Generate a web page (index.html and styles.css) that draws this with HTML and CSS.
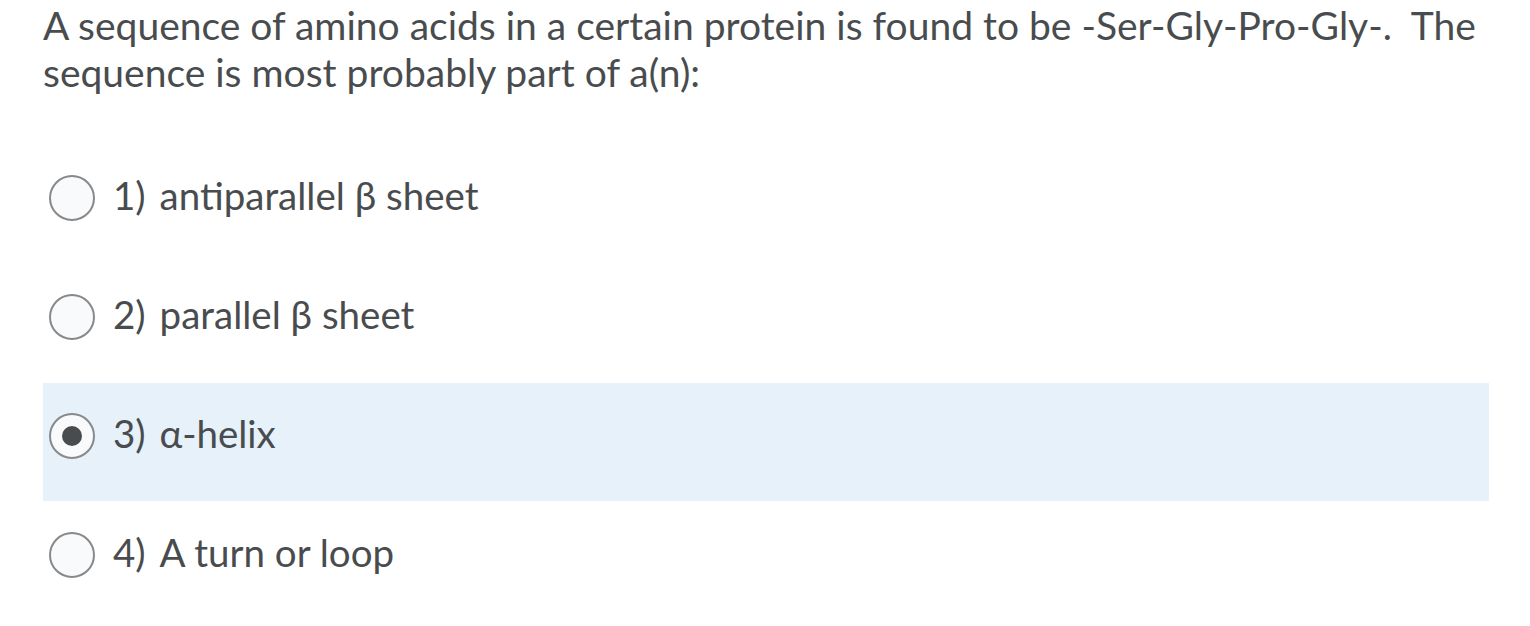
FILE: index.html
```html
<!DOCTYPE html>
<html lang="en">
<head>
<meta charset="utf-8">
<title>Question</title>
<link rel="stylesheet" href="styles.css">
</head>
<body>
<div class="quiz">
  <p class="question">A sequence of amino acids in a certain protein is found to be -Ser-Gly-Pro-Gly-.&nbsp; The sequence is most probably part of a(n):</p>
  <div class="options">
    <label class="option">
      <span class="radio"></span>
      <span class="label"><span class="num">1)</span>antiparallel β sheet</span>
    </label>
    <label class="option">
      <span class="radio"></span>
      <span class="label"><span class="num">2)</span>parallel β sheet</span>
    </label>
    <label class="option selected">
      <span class="radio checked"></span>
      <span class="label"><span class="num">3)</span>α-helix</span>
    </label>
    <label class="option">
      <span class="radio"></span>
      <span class="label"><span class="num">4)</span>A turn or loop</span>
    </label>
  </div>
</div>
</body>
</html>
```

FILE: styles.css
```css
html, body {
  margin: 0;
  padding: 0;
  background: #ffffff;
}

body {
  font-family: Lato, "Noto Sans", sans-serif;
  color: #494c4e;
}

.quiz {
  width: 1446px;
  padding-left: 43px;
}

.question {
  margin: 0;
  padding-top: 2px;
  font-size: 39px;
  line-height: 47px;
  height: 145px;
  box-sizing: border-box;
}

.options {
  display: flex;
  flex-direction: column;
}

.option {
  display: flex;
  align-items: flex-start;
  height: 119px;
  box-sizing: border-box;
  padding: 30px 0 0 6px;
}

.option.selected {
  background: #e6f1fa;
  height: 118px;
  margin-bottom: 1px;
}

.radio {
  flex: none;
  width: 46px;
  height: 46px;
  box-sizing: border-box;
  border: 2px solid #87898b;
  border-radius: 50%;
  background: #f9fafc;
  display: flex;
  align-items: center;
  justify-content: center;
}

.radio.checked::after {
  content: "";
  width: 20px;
  height: 20px;
  border-radius: 50%;
  background: #494c4e;
}

.label {
  margin-left: 18px;
  margin-top: -3px;
  font-size: 38.5px;
  line-height: 46px;
  white-space: nowrap;
}

.num {
  margin-right: 14px;
}
```
